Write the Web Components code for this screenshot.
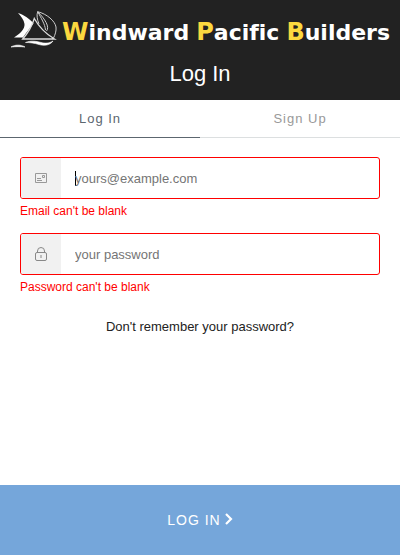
<!DOCTYPE html>
<html lang="en">
<head>
<meta charset="utf-8">
<meta name="viewport" content="width=device-width, initial-scale=1">
<title>Log In</title>
<style>
  html, body { margin: 0; height: 100%; }
  body { font-family: "Liberation Sans", Arial, sans-serif; background: #fff; color: #222; }
</style>
</head>
<body>
<login-panel></login-panel>
<script>
  const define = (name, html, setup) => {
    const template = document.createElement('template');
    template.innerHTML = html;
    customElements.define(name, class extends HTMLElement {
      constructor() {
        super();
        this.attachShadow({ mode: 'open' }).append(template.content.cloneNode(true));
      }
      connectedCallback() { if (setup) setup(this, this.shadowRoot); }
    });
  };

  define('brand-logo', `
    <style>
      :host { display: flex; gap: 4px; align-items: flex-start; color: #fff;
        font: bold 22px/32px "DejaVu Sans", Verdana, sans-serif; white-space: nowrap; }
      svg { flex: none; width: 48px; height: 40px; }
      .name { display: flex; gap: 7px; padding-top: 6px; font-variant-ligatures: none; }
      b { color: #fbd83f; font-size: 24px; }
    </style>
    <svg viewBox="0 0 48 40" fill="none" stroke="#fff" aria-hidden="true">
      <path d="M8 3C14 5 20 9 23.500 13.500C20 18 16 23 13 27.500L4 27.500C10 24 15 19 14.500 14C14 10 11 6 8 3Z" fill="#fff" stroke="none"/>
      <path d="M24.300 8.500C22 16 18 23 12.700 29H44.500C36 24 29 17 24.300 8.500Z" stroke="#ddd" stroke-width="1.300"/>
      <path d="M27.700 1.700C37 4 45 11 46 17C46.500 21 45 25 43.500 28M27.700 1.700C26.500 5 27 9 29 14M27.700 1.700C35 9 40 17 36.500 21M27.700 1.700C31 8 35 14 35.500 20" stroke="#ccc" stroke-width="1"/>
      <path d="M15.500 32.500C20 30.500 26 31 31 32.500C35 33.500 39 33.500 43 31C40 35.500 34 36 29 34.500C24 33 20 32.500 15.500 32.500ZM1 37C5 34.500 11 34.500 15 37C10 36.500 6 36.500 1 37Z" fill="#fff" stroke="#fff" stroke-width=".6"/>
    </svg>
    <span class="name"><span><b>W</b>indward</span><span><b>P</b>acific</span><span><b>B</b>uilders</span></span>
  `);

  define('panel-header', `
    <style>
      :host { display: block; background: #222; color: #fff; padding: 10px 10px 11px; }
      h1 { margin: 8px 0 0; font-size: 22px; line-height: 31px; font-weight: 400; text-align: center; }
    </style>
    <brand-logo></brand-logo>
    <h1><slot></slot></h1>
  `);

  define('panel-tabs', `
    <style>
      :host { display: grid; grid-template-columns: 1fr 1fr; }
      button { height: 38px; padding: 0; border: 0; border-bottom: 1px solid #dcdfe0; background: none;
        font: 13px/37px "Liberation Sans", Arial, sans-serif; letter-spacing: 1px; color: #999; cursor: pointer; }
      button[aria-selected="true"] { color: #5c666f; border-color: #5c666f; }
    </style>
    <button type="button" role="tab" aria-selected="true">Log In</button>
    <button type="button" role="tab" aria-selected="false">Sign Up</button>
  `, host => host.setAttribute('role', 'tablist'));

  define('form-field', `
    <style>
      :host { display: block; }
      .box { display: flex; height: 40px; border: 1px solid #f00; border-radius: 3px; overflow: hidden; background: #fff; }
      .icon { flex: none; display: flex; align-items: center; justify-content: center; width: 40px; background: #f1f1f1; }
      input { flex: 1; min-width: 0; border: 0; outline: 0; padding: 0 14px; background: none;
        font: 13px "Liberation Sans", Arial, sans-serif; color: #000; }
      input::placeholder { color: #757575; opacity: 1; }
      :host([active]) input:placeholder-shown { caret-color: transparent;
        background: linear-gradient(#000, #000) 14px center / 1px 15px no-repeat; }
      p { margin: 5px 0 0; font-size: 12px; line-height: 14px; color: #f00; }
    </style>
    <div class="box"><span class="icon"><slot></slot></span><input aria-describedby="error"></div>
    <p id="error"></p>
  `, (host, root) => {
    const input = root.querySelector('input');
    input.type = host.getAttribute('type');
    input.placeholder = host.getAttribute('placeholder');
    input.setAttribute('aria-label', host.getAttribute('label'));
    input.setAttribute('aria-invalid', 'true');
    root.querySelector('p').textContent = host.getAttribute('error');
  });

  define('submit-button', `
    <style>
      :host { display: block; }
      button { display: flex; align-items: center; justify-content: center; gap: 4px; width: 100%; height: 70px;
        padding: 0; border: 0; background: #75a6da; color: #fff; letter-spacing: 1px;
        font: 14px "Liberation Sans", Arial, sans-serif; cursor: pointer; }
      svg { width: 8px; height: 12px; margin-bottom: 2px; }
    </style>
    <button type="submit"><span><slot></slot></span>
      <svg viewBox="0 0 8 12" fill="none" stroke="#fff" stroke-width="2.2" aria-hidden="true"><path d="M1 1L6 6L1 11"/></svg>
    </button>
  `);

  define('login-panel', `
    <style>
      :host { display: flex; flex-direction: column; min-height: 100%; }
      main { flex: 1; display: flex; flex-direction: column; gap: 15px; padding: 19px 20px; }
      a { align-self: center; margin-top: 9px; font-size: 13px; line-height: 18px; color: #222; text-decoration: none; }
    </style>
    <panel-header>Log In</panel-header>
    <panel-tabs></panel-tabs>
    <main>
      <form-field active type="email" label="Email" placeholder="yours@example.com" error="Email can't be blank">
        <svg width="12" height="10" viewBox="0 0 12 10" fill="none" stroke="#999" aria-hidden="true">
          <path d="M.5 .5H11.5V9.5H.5ZM7.5 2.5H9.5V4.5H7.5ZM2 5.5H6M2 7.5H7"/>
        </svg>
      </form-field>
      <form-field type="password" label="Password" placeholder="your password" error="Password can't be blank">
        <svg width="12" height="14" viewBox="0 0 12 14" fill="none" stroke="#888" aria-hidden="true">
          <rect x=".5" y="5.5" width="11" height="8" rx="1.5"/>
          <path d="M2.5 5.5V4A3.5 3.5 0 0 1 9.5 4V5.5M6 8V11"/>
        </svg>
      </form-field>
      <a href="#">Don't remember your password?</a>
    </main>
    <submit-button>LOG IN</submit-button>
  `);
</script>
</body>
</html>
